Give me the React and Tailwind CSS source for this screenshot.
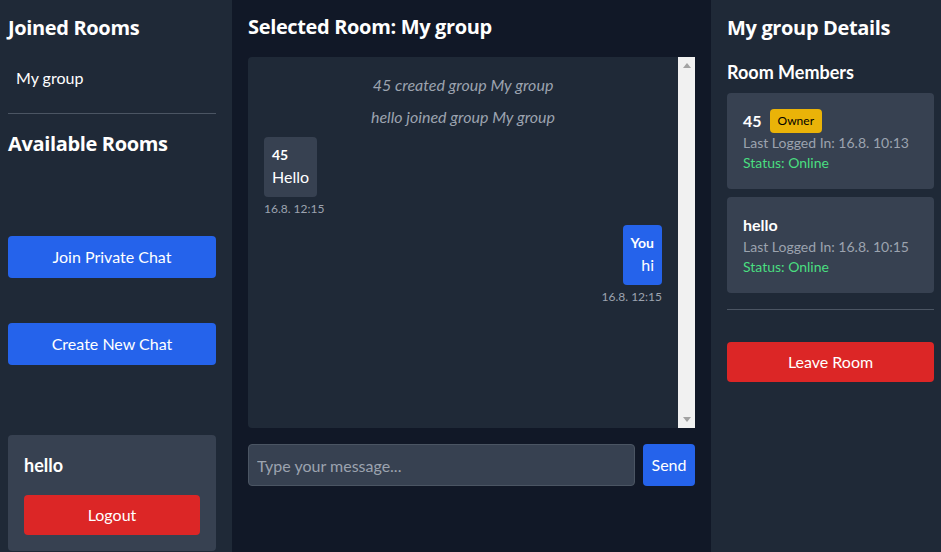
import React from "react";

const members = [
  { name: "45", owner: true, last: "16.8. 10:13" },
  { name: "hello", owner: false, last: "16.8. 10:15" },
];

const headFont = { fontFamily: "'Open Sans', Lato, sans-serif" };

function ScrollTrack() {
  return (
    <div className="flex w-[17px] shrink-0 flex-col items-center justify-between bg-[#f1f1f1] py-[6px]">
      <svg width="8" height="5" viewBox="0 0 8 5">
        <path d="M0 5 L4 0 L8 5 Z" fill="#a3a3a3" />
      </svg>
      <svg width="8" height="5" viewBox="0 0 8 5">
        <path d="M0 0 L4 5 L8 0 Z" fill="#a3a3a3" />
      </svg>
    </div>
  );
}

function Sidebar() {
  return (
    <aside className="flex w-[232px] shrink-0 flex-col bg-[#1f2937] pl-2 pr-4 pt-[14px]">
      <h2 style={headFont} className="text-xl font-bold leading-7 tracking-[-0.35px] text-white">
        Joined Rooms
      </h2>
      <ul className="mt-4">
        <li className="px-2 py-2 text-base leading-6 text-white">My group</li>
      </ul>
      <hr className="mb-4 mt-[15px] border-[#4b5563]" />
      <h2 style={headFont} className="text-xl font-bold leading-7 tracking-[-0.35px] text-white">
        Available Rooms
      </h2>

      <button
        type="button"
        className="mt-[78px] h-[42px] w-full rounded bg-[#2563eb] text-base text-white"
      >
        Join Private Chat
      </button>
      <button
        type="button"
        className="mt-[45px] h-[42px] w-full rounded bg-[#2563eb] text-base text-white"
      >
        Create New Chat
      </button>

      <div className="mt-[70px] rounded bg-[#374151] p-4">
        <p className="text-lg font-bold leading-7 text-white">hello</p>
        <button
          type="button"
          className="mt-4 h-10 w-full rounded bg-[#dc2626] text-base text-white"
        >
          Logout
        </button>
      </div>
    </aside>
  );
}

function ChatArea() {
  return (
    <main className="flex flex-1 flex-col bg-[#111827] px-4 pt-[13px]">
      <h2 style={headFont} className="text-xl font-bold leading-7 tracking-[-0.35px] text-white">
        Selected Room: My group
      </h2>
      <div className="mt-4 flex h-[371px] rounded bg-[#1f2937]">
        <div className="flex-1 px-4 pt-3">
          <p className="h-8 text-center text-base italic leading-8 text-[#9ca3af]">
            45 created group My group
          </p>
          <p className="h-8 text-center text-base italic leading-8 text-[#9ca3af]">
            hello joined group My group
          </p>

          <div className="mt-1 flex flex-col items-start">
            <div className="rounded bg-[#374151] p-2 text-white">
              <p className="text-sm font-bold leading-5">45</p>
              <p className="text-base leading-6">Hello</p>
            </div>
            <span className="mt-1 text-xs leading-4 text-[#9ca3af]">16.8. 12:15</span>
          </div>

          <div className="mt-2 flex flex-col items-end">
            <div className="rounded bg-[#2563eb] p-2 text-right text-white">
              <p className="text-sm font-bold leading-5">You</p>
              <p className="text-base leading-6">hi</p>
            </div>
            <span className="mt-1 text-xs leading-4 text-[#9ca3af]">16.8. 12:15</span>
          </div>
        </div>
        <ScrollTrack />
      </div>

      <div className="mt-4 flex gap-2">
        <input
          type="text"
          placeholder="Type your message..."
          className="h-[42px] flex-1 rounded border border-[#4b5563] bg-[#374151] px-2 text-base text-white outline-none placeholder:text-[#9ca3af]"
        />
        <button
          type="button"
          className="h-[42px] w-[52px] rounded bg-[#2563eb] text-base text-white"
        >
          Send
        </button>
      </div>
    </main>
  );
}

function Details() {
  return (
    <aside className="flex w-[230px] shrink-0 flex-col bg-[#1f2937] pl-4 pr-[7px] pt-[14px]">
      <h2 style={headFont} className="text-xl font-bold leading-7 tracking-[-0.35px] text-white">
        My group Details
      </h2>
      <h3 className="mt-4 text-lg font-bold leading-7 text-white">Room Members</h3>
      <div className="mt-[7px] flex flex-col gap-2">
        {members.map((m) => (
          <div key={m.name} className="rounded bg-[#374151] p-4">
            <div className="flex h-6 items-center">
              <span className="text-base font-bold text-white">{m.name}</span>
              {m.owner && (
                <span className="ml-2 rounded bg-[#eab308] px-2 py-1 text-xs leading-4 text-black">
                  Owner
                </span>
              )}
            </div>
            <p className="text-sm leading-5 text-[#9ca3af]">Last Logged In: {m.last}</p>
            <p className="text-sm leading-5 text-[#4ade80]">Status: Online</p>
          </div>
        ))}
      </div>
      <hr className="mt-4 border-[#4b5563]" />
      <button
        type="button"
        className="mt-8 h-10 w-full rounded bg-[#dc2626] text-base text-white"
      >
        Leave Room
      </button>
    </aside>
  );
}

export default function App() {
  return (
    <div
      className="flex h-[552px] w-[941px] overflow-hidden"
      style={{ fontFamily: "Lato, 'Noto Sans', sans-serif" }}
    >
      <Sidebar />
      <ChatArea />
      <Details />
    </div>
  );
}
